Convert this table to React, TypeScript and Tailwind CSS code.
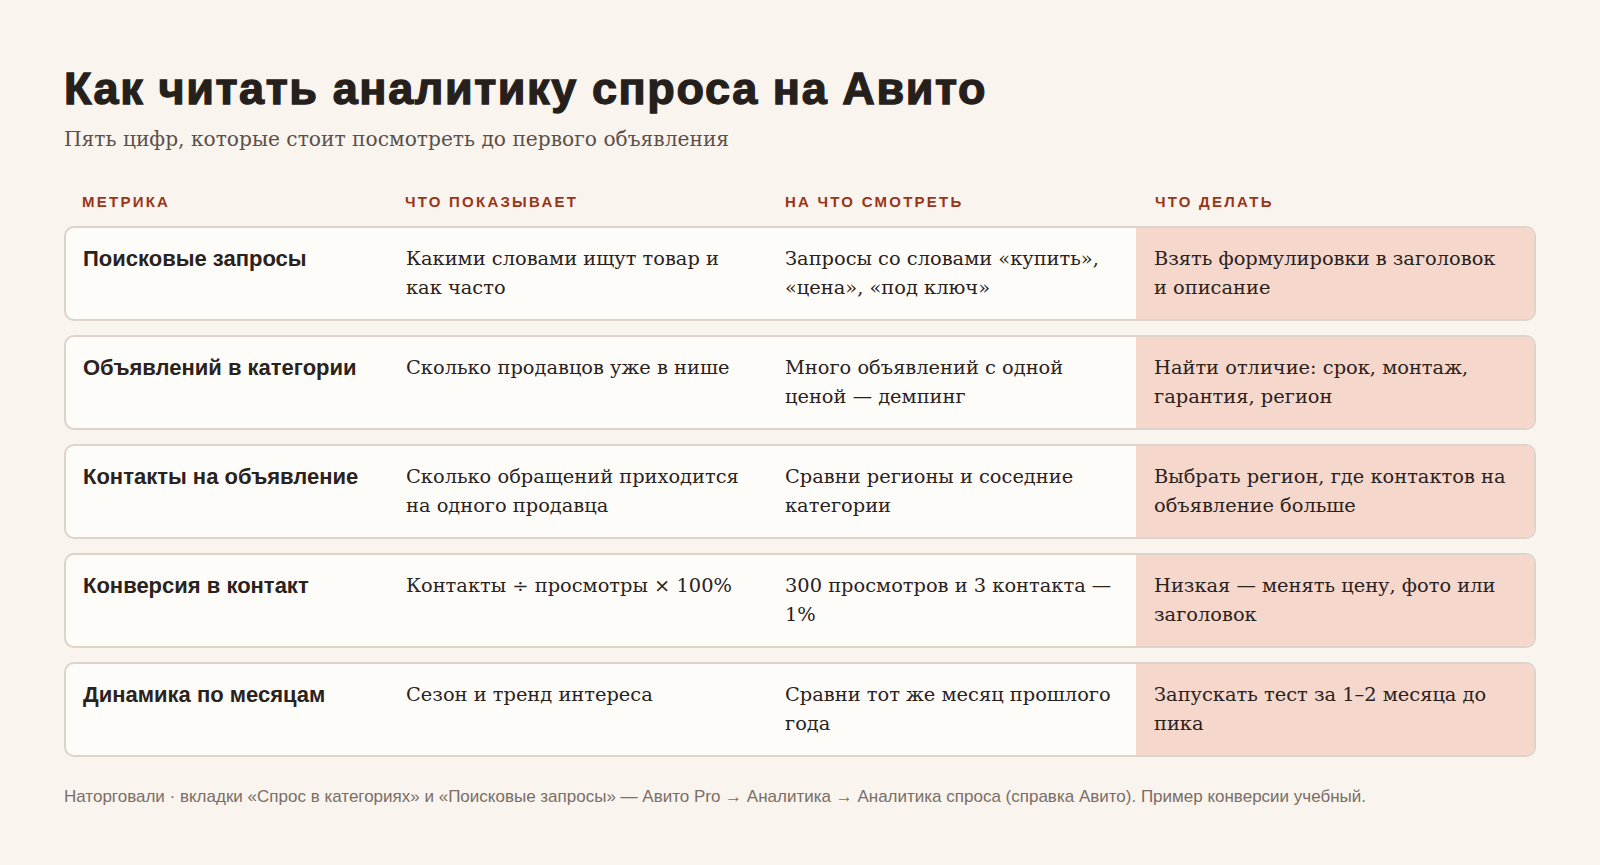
import React from "react";

const rows = [
  {
    m: "Поисковые запросы",
    s: ["Какими словами ищут товар и", "как часто"],
    w: ["Запросы со словами «купить»,", "«цена», «под ключ»"],
    d: ["Взять формулировки в заголовок", "и описание"],
  },
  {
    m: "Объявлений в категории",
    s: ["Сколько продавцов уже в нише"],
    w: ["Много объявлений с одной", "ценой — демпинг"],
    d: ["Найти отличие: срок, монтаж,", "гарантия, регион"],
  },
  {
    m: "Контакты на объявление",
    s: ["Сколько обращений приходится", "на одного продавца"],
    w: ["Сравни регионы и соседние", "категории"],
    d: ["Выбрать регион, где контактов на", "объявление больше"],
  },
  {
    m: "Конверсия в контакт",
    s: ["Контакты ÷ просмотры × 100%"],
    w: ["300 просмотров и 3 контакта —", "1%"],
    d: ["Низкая — менять цену, фото или", "заголовок"],
  },
  {
    m: "Динамика по месяцам",
    s: ["Сезон и тренд интереса"],
    w: ["Сравни тот же месяц прошлого", "года"],
    d: ["Запускать тест за 1–2 месяца до", "пика"],
  },
];

const sans = "font-['Liberation_Sans',Arial,sans-serif]";
const serif = "font-['DejaVu_Serif','Liberation_Serif',serif]";
const cols =
  "grid grid-cols-[minmax(0,322fr)_minmax(0,379fr)_minmax(0,369fr)_minmax(0,398fr)]";

function Lines({ lines }: { lines: string[] }) {
  return (
    <>
      {lines.map((l, i) => (
        <span key={i} className="block whitespace-nowrap">
          {l}
        </span>
      ))}
    </>
  );
}

export default function App() {
  return (
    <div className="min-h-[865px] w-full bg-[#f9f4ee] px-16 pt-[63px] text-[#2a221d]">
      <h1
        className={`${sans} text-[45px] font-bold leading-[52px] tracking-[1.6px] text-[#26201c] [-webkit-text-stroke:1.3px_#26201c]`}
      >
        Как читать аналитику спроса на Авито
      </h1>
      <p className={`${serif} mt-[9px] text-[20.2px] leading-[30px] text-[#5b504a]`}>
        Пять цифр, которые стоит посмотреть до первого объявления
      </p>

      <div className={`${cols} mt-[39px] pb-[15px]`}>
        {["Метрика", "Что показывает", "На что смотреть", "Что делать"].map((h) => (
          <div
            key={h}
            className={`${sans} px-[18px] text-[15px] font-bold uppercase leading-[18px] tracking-[0.15em] text-[#9b3518]`}
          >
            {h}
          </div>
        ))}
      </div>

      <div className="flex flex-col gap-[14px]">
        {rows.map((r) => (
          <div
            key={r.m}
            className={`${cols} overflow-hidden rounded-[10px] border-2 border-[#ddd3ca] bg-[#fefcf9]`}
          >
            <div className={`${sans} px-[17px] py-[17px] text-[22px] font-bold leading-[28.5px] text-[#2a221d]`}>
              {r.m}
            </div>
            <div className={`${serif} px-[18px] py-[17px] text-[19.4px] leading-[28.5px]`}>
              <Lines lines={r.s} />
            </div>
            <div className={`${serif} px-[18px] py-[17px] text-[19.4px] leading-[28.5px]`}>
              <Lines lines={r.w} />
            </div>
            <div className={`${serif} bg-[#f5d7cc] px-[18px] py-[17px] text-[19.4px] leading-[28.5px]`}>
              <Lines lines={r.d} />
            </div>
          </div>
        ))}
      </div>

      <p className={`${sans} mt-[29px] text-[17px] leading-[22px] text-[#7a6e66]`}>
        Наторговали · вкладки «Спрос в категориях» и «Поисковые запросы» — Авито Pro → Аналитика → Аналитика спроса
        (справка Авито). Пример конверсии учебный.
      </p>
    </div>
  );
}
